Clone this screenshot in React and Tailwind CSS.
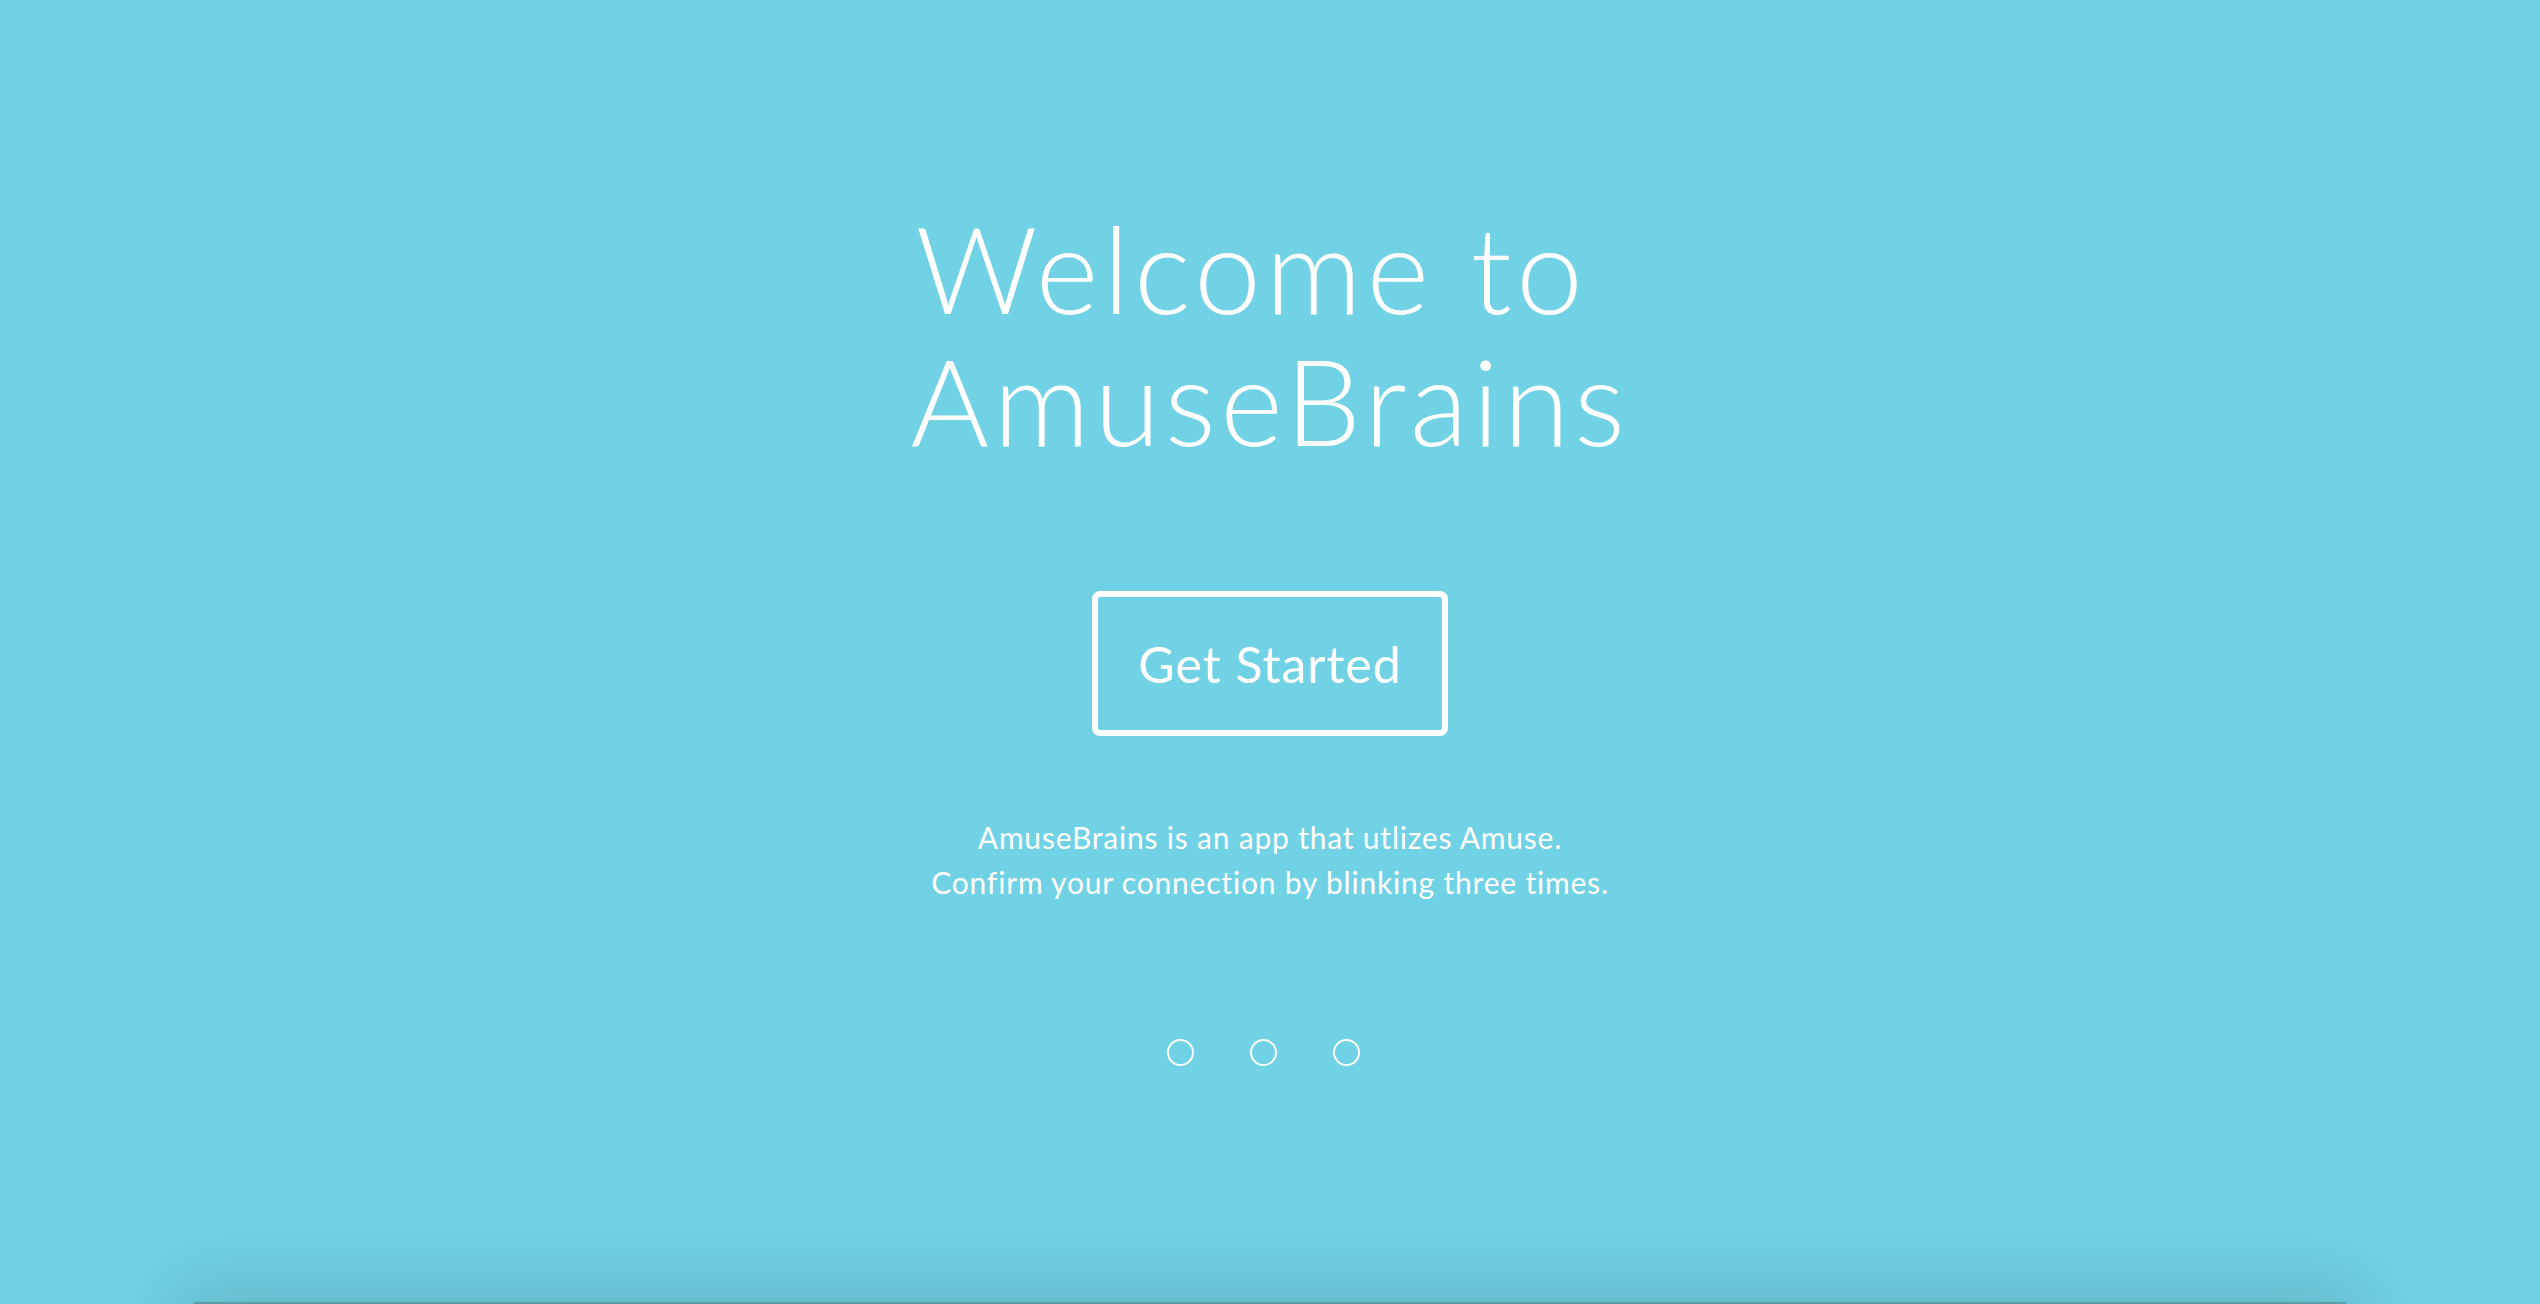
export default function App() {
  return (
    <div className="min-h-screen bg-[#71d1e5] overflow-hidden font-['Lato','Liberation_Sans',sans-serif] text-white">
      <section className="h-[1302px] flex flex-col items-center pt-[202px]">
        <h1 className="text-center text-[120px] leading-[132px] font-light tracking-[4.5px]">
          {'Welcome to\u00a0'}
          <br />
          AmuseBrains
        </h1>

        <button className="mt-[125px] w-[356px] h-[145px] border-[6px] border-white rounded-[8px] text-[50px] font-normal leading-none tracking-[1px]">
          Get Started
        </button>

        <div className="mt-[79px] text-center text-[30px] leading-[45px] tracking-[0.8px]">
          <p>AmuseBrains is an app that utlizes Amuse.</p>
          <p>Confirm your connection by blinking three times.</p>
        </div>

        <div className="mt-[134px] pr-[14px] flex items-center gap-[56px]">
          <span className="w-[27px] h-[27px] rounded-full border-2 border-white" />
          <span className="w-[27px] h-[27px] rounded-full border-2 border-white" />
          <span className="w-[27px] h-[27px] rounded-full border-2 border-white" />
        </div>
      </section>

      <div className="mx-[194px] h-[400px] bg-[#5a9eaa] shadow-[0_0_70px_20px_rgba(0,0,0,0.12)]" />
    </div>
  );
}
